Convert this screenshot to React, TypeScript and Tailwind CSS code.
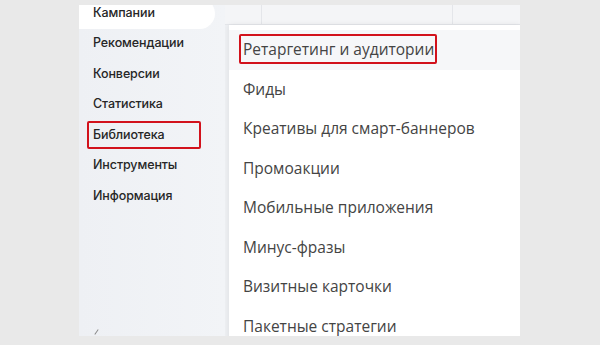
const sideItems = [
  "Кампании",
  "Рекомендации",
  "Конверсии",
  "Статистика",
  "Библиотека",
  "Инструменты",
  "Информация",
];

const libraryItems = [
  "Ретаргетинг и аудитории",
  "Фиды",
  "Креативы для смарт-баннеров",
  "Промоакции",
  "Мобильные приложения",
  "Минус-фразы",
  "Визитные карточки",
  "Пакетные стратегии",
];

// red annotation frame drawn over a label
function Marked({ children, wide }: { children: React.ReactNode; wide?: boolean }) {
  return (
    <span className="relative inline-block">
      {children}
      <span
        className={
          wide
            ? "pointer-events-none absolute -bottom-[4px] -left-[6px] -right-[36px] -top-[5px] rounded-[2px] border-[2.5px] border-[#d2121c]"
            : "pointer-events-none absolute -bottom-[3px] -left-[4px] -right-[3px] -top-[4px] rounded-[2px] border-[2.5px] border-[#d2121c]"
        }
      />
    </span>
  );
}

export default function App() {
  return (
    <div
      className="h-[345px] w-[600px] overflow-hidden bg-[#e9e9e9] pt-[5px] pl-[79px]"
      style={{ fontFamily: "'Open Sans', 'Noto Sans', sans-serif" }}
    >
      <div className="flex h-[331px] w-[441px] overflow-hidden">
        {/* SIDEBAR */}
        <aside className="relative w-[146px] shrink-0 bg-gradient-to-r from-[#eef0f4] to-[#f2f4f7]">
          <ul
            className="-mt-[7px] text-[12.5px] font-medium tracking-[-0.1px] text-[#262626]"
            style={{ fontFamily: "Inter, 'Noto Sans', sans-serif" }}
          >
            {sideItems.map((item, i) => (
              <li
                key={item}
                className={
                  i === 0
                    ? "flex h-[30.5px] w-[136px] items-center rounded-br-[16px] rounded-tr-[16px] bg-white pl-[14px]"
                    : "flex h-[30.5px] items-center pl-[14px]"
                }
              >
                {item === "Библиотека" ? <Marked wide>{item}</Marked> : item}
              </li>
            ))}
          </ul>
          <span className="absolute bottom-[1px] left-[17px] h-[6px] w-px rotate-[35deg] bg-[#888]" />
        </aside>

        {/* CONTENT */}
        <div className="flex min-w-0 flex-1 flex-col bg-[#eef0f3]">
          <div className="grid h-[20px] shrink-0 grid-cols-[37px_191px_1fr] border-b border-[#e4e6ea] bg-[#f4f5f7]">
            <div className="border-r border-[#e4e6ea]" />
            <div className="border-r border-[#e4e6ea]" />
            <div />
          </div>
          <div className="ml-[4px] flex-1 bg-white pt-[5px] text-[15.5px] text-[#444] shadow-[0_0_6px_rgba(0,0,0,0.08)]">
            {libraryItems.map((item, i) => (
              <div
                key={item}
                className={
                  i === 0
                    ? "flex h-[39.5px] items-center bg-[#f6f7f9] pl-[14px]"
                    : "flex h-[39.5px] items-center pl-[14px]"
                }
              >
                {i === 0 ? <Marked>{item}</Marked> : item}
              </div>
            ))}
          </div>
        </div>
      </div>
    </div>
  );
}
